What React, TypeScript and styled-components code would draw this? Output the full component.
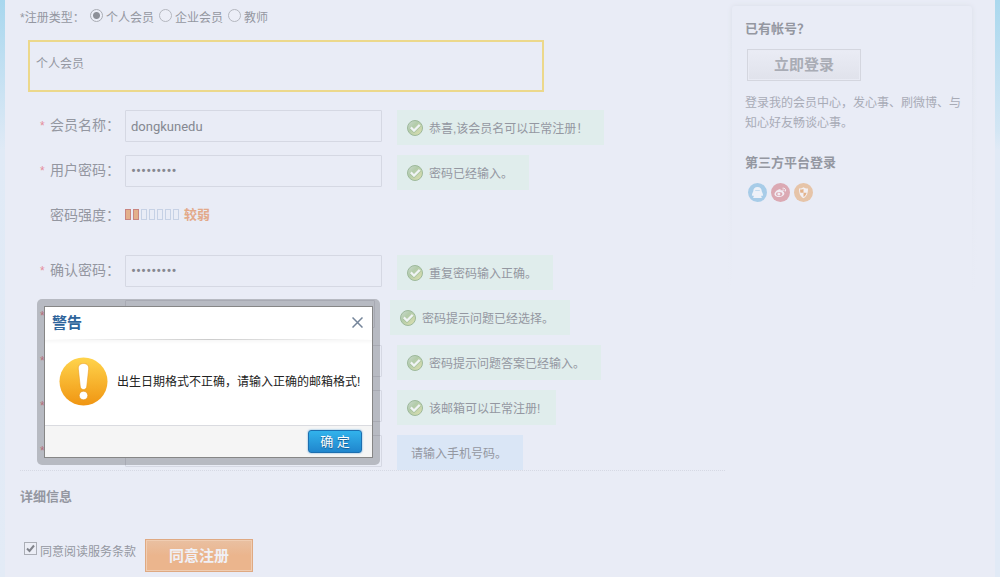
import React from "react";
import styled, { createGlobalStyle, css } from "styled-components";

const sans = `"Liberation Sans", "Noto Sans CJK SC", sans-serif`;

const GlobalStyle = createGlobalStyle`
  *, *::before, *::after { box-sizing: border-box; }
  body {
    margin: 0;
    background: #e9ecf6;
    color: #9497a1;
    font: 12px/20px ${sans};
  }
  button, input, select { font: inherit; color: inherit; margin: 0; }
  h1, h2, p { margin: 0; }
`;

const Page = styled.div`
  position: relative;
  min-height: 577px;
  padding: 0 5px;
  background:
    linear-gradient(#a8d7ee, #e0eaf6 150px, #e3ebf6) left / 5px 100% no-repeat,
    linear-gradient(#aad8ee, #d3e6f4 130px, #e1eaf6 150px) right / 5px 100% no-repeat,
    #e9ecf6;
`;

const Columns = styled.div`
  display: flex;
  align-items: flex-start;
  gap: 7px;
  padding: 0 23px 0 15px;
`;

const Main = styled.form`
  flex: 1;
  min-width: 0;
`;

const TypeBar = styled.fieldset`
  display: flex;
  align-items: center;
  gap: 5px;
  height: 40px;
  margin: 0;
  padding: 0 0 4px;
  border: 0;
`;

const TypeLabel = styled.span`
  width: 65px;
  white-space: nowrap;
`;

const Choice = styled.label`
  display: flex;
  align-items: center;
  gap: 3px;
  white-space: nowrap;
`;

const Radio = styled.input`
  appearance: none;
  width: 13px;
  height: 13px;
  margin-bottom: 6px;
  border: 1px solid #b4b7bf;
  border-radius: 50%;
  background: #eceef7;
  &:checked {
    border-color: #a9acb4;
    background: radial-gradient(circle, #8d9098 3px, #eceef7 4px);
  }
`;

const TypeNote = styled.div`
  width: 516px;
  max-width: 100%;
  height: 52px;
  margin-left: 8px;
  padding: 12px 6px;
  border: 2px solid #ecd88b;
`;

const Fields = styled.div`
  display: grid;
  gap: 10px;
  padding-top: 18px;
  border-bottom: 1px dotted #d6d9e4;
`;

const Row = styled.div<{ $tall?: boolean }>`
  display: flex;
  align-items: flex-start;
  height: ${(p) => (p.$tall ? 45 : 35)}px;
`;

const FieldLabel = styled.label`
  width: 105px;
  padding-left: 20px;
  font-size: 14px;
  line-height: 30px;
  white-space: nowrap;
`;

const Star = styled.span`
  display: inline-block;
  width: 10px;
  font-size: 12px;
  color: #e58d9a;
`;

const control = css`
  height: 32px;
  padding: 0 5px;
  border: 1px solid #d5d8e3;
  border-radius: 1px;
  background: #e9ecf6;
  outline: 0;
`;

const TextBox = styled.input`
  ${control}
  width: 257px;
  font-family: Roboto, sans-serif;
  font-size: ${(p) => (p.type === "password" ? 15 : 13)}px;
  color: #858891;
`;

const Select = styled.select`
  ${control}
  width: 250px;
  height: 28px;
`;

const Tip = styled.div<{ $hint?: boolean }>`
  display: flex;
  align-items: center;
  gap: 6px;
  height: 35px;
  margin-left: 15px;
  padding: 0 16px 0 ${(p) => (p.$hint ? 14 : 10)}px;
  background: ${(p) => (p.$hint ? "#dae6f6" : "#e0edec")};
  white-space: nowrap;
`;

const TipText = styled.span`
  padding-top: 2px;
`;

const Strength = styled.div`
  display: flex;
  align-items: center;
  gap: 2px;
  height: 29px;
`;

const Cell = styled.span<{ $on: boolean }>`
  width: 6px;
  height: 11px;
  border: 1px solid ${(p) => (p.$on ? "#c98580" : "#c6d1e5")};
  background: ${(p) => (p.$on ? "#e3b08b" : "transparent")};
`;

const Level = styled.strong`
  margin-left: 3px;
  font-size: 13px;
  color: #e3a98a;
`;

const SectionTitle = styled.h2`
  font-size: 13px;
  line-height: 20px;
  color: #9497a1;
`;

const Details = styled.section`
  padding: 16px 0 32px;
`;

const Submit = styled.div`
  display: flex;
  align-items: center;
  gap: 9px;
  padding-left: 4px;
`;

const Terms = styled.label`
  display: flex;
  align-items: center;
  gap: 3px;
  padding-bottom: 8px;
  white-space: nowrap;
`;

const TickBox = styled.span`
  position: relative;
  display: flex;
  width: 13px;
  height: 13px;
  margin-bottom: 6px;
  svg { position: absolute; inset: 0; pointer-events: none; }
  input {
    appearance: none;
    width: 13px;
    height: 13px;
    border: 1px solid #abaeb6;
    background: #eceef6;
  }
`;

const RegisterButton = styled.button`
  width: 108px;
  height: 33px;
  padding: 0;
  border: 1px solid #dfa982;
  background: linear-gradient(#e9c0a2, #ebb58d 50%, #ebb58d);
  box-shadow: inset 0 0 0 1px #f0cdb2;
  font-size: 15px;
  font-weight: bold;
  color: #f0f0f6;
`;

const Side = styled.aside`
  position: relative;
  z-index: 0;
  width: 240px;
  min-height: 294px;
  margin-top: 6px;
  padding: 13px 10px 0 13px;
  &::before, &::after {
    content: "";
    position: absolute;
    z-index: -1;
    inset: 0;
    border-radius: 3px;
    box-shadow: 0 0 5px #dadde7;
  }
  &::after {
    inset: 20px -8px -8px;
    box-shadow: none;
    background: linear-gradient(#e9ecf600, #e9ecf6 270px);
  }
`;

const LoginButton = styled.button`
  display: block;
  width: 114px;
  height: 32px;
  margin: 10px 0 12px 2px;
  padding: 0;
  border: 1px solid #d4d6df;
  background: linear-gradient(#eaecf5, #e0e2eb);
  box-shadow: inset 0 0 0 1px #e9ebf4;
  font-size: 15px;
  font-weight: bold;
  color: #a9acb5;
`;

const Blurb = styled.p`
  margin-bottom: 20px;
  color: #a8abb6;
`;

const Socials = styled.div`
  display: flex;
  gap: 4px;
  margin: 10px 0 0 3px;
  a { display: block; height: 19px; }
  svg { display: block; }
`;

const Frame = styled.div`
  position: absolute;
  left: 37px;
  top: 299px;
  width: 343px;
  padding: 7px;
  border-radius: 5px;
  background: rgba(0, 0, 0, 0.21);
`;

const Dialog = styled.div`
  border: 1px solid #868686;
  background: #fff;
  color: #222;
`;

const DialogHead = styled.div`
  display: flex;
  align-items: center;
  justify-content: space-between;
  height: 33px;
  padding: 0 7px 2px;
  background: linear-gradient(90deg, #fff, #ccc 50%, #fff) bottom / 100% 1px no-repeat;
`;

const DialogTitle = styled.h1`
  font-size: 15px;
  line-height: 20px;
  color: #2f659c;
`;

const CloseButton = styled.button`
  display: flex;
  padding: 2px;
  border: 0;
  background: none;
`;

const DialogBody = styled.div`
  display: flex;
  align-items: center;
  gap: 9px;
  height: 85px;
  padding: 0 0 2px 14px;
  background: linear-gradient(#f7f7f7, #fff 4px);
  white-space: nowrap;
`;

const DialogFoot = styled.div`
  display: flex;
  align-items: center;
  justify-content: flex-end;
  height: 32px;
  padding-right: 10px;
  border-top: 1px solid #dadbe0;
  background: #f5f5f5;
`;

const OkButton = styled.button`
  width: 54px;
  height: 23px;
  padding: 0;
  border: 1px solid #1c6fb0;
  border-radius: 3px;
  background: linear-gradient(#32b3ec, #2086cd);
  box-shadow: 0 0 2px #58a5dc;
  line-height: 20px;
  font-size: 13px;
  color: #fff;
  text-shadow: 0 1px 1px #14558c;
`;

const CheckBall = () => (
  <svg width="16" height="16" viewBox="0 0 16 16" aria-hidden="true">
    <defs>
      <linearGradient id="ball" x1="0" y1="0" x2="1" y2="1">
        <stop offset="0" stopColor="#cbd9d2" />
        <stop offset=".4" stopColor="#b3ccaa" />
        <stop offset="1" stopColor="#e2e2b0" />
      </linearGradient>
    </defs>
    <circle cx="8" cy="8" r="7.5" fill="url(#ball)" stroke="#9db99b" />
    <path d="M3.800 7.600 7 10.800l5.700-5.600" fill="none" stroke="#9dba94" strokeWidth="3.200" />
    <path d="M3.800 7.300 7 10.500l5.700-5.600" fill="none" stroke="#f0f4f4" strokeWidth="2.400" />
  </svg>
);

const WarningIcon = () => (
  <svg width="49" height="49" viewBox="0 0 49 49" aria-hidden="true">
    <defs>
      <linearGradient id="warn" x1="0" y1="0" x2="0" y2="1">
        <stop offset="0" stopColor="#ffd44c" />
        <stop offset="1" stopColor="#f09512" />
      </linearGradient>
    </defs>
    <circle cx="24.500" cy="24.500" r="24" fill="url(#warn)" />
    <path
      d="M24.500 6.500c3.800 0 5.500 2.200 5.200 5.600l-1.900 17c-.3 2.300-1.300 3.400-3.300 3.400s-3-1.100-3.300-3.400l-1.900-17c-.3-3.400 1.400-5.600 5.200-5.600z"
      fill="#fff"
      stroke="#ec9c1c"
      strokeWidth=".6"
    />
    <circle cx="24.500" cy="38.500" r="4.300" fill="#fff" stroke="#e08d10" strokeWidth=".6" />
  </svg>
);

const QqIcon = () => (
  <svg width="19" height="19" viewBox="0 0 19 19" aria-hidden="true">
    <circle cx="9.500" cy="9.500" r="9.500" fill="#a7cce8" />
    <path
      d="M9.500 4c-2.800 0-4.200 1.700-4.200 4 0 .8-1.400 2.500-1.400 4.300 0 .8.700.6 1.200-.1.200.7.500 1.200.9 1.600-.7.300-1 .7-.8 1.200h8.600c.2-.5-.1-.9-.8-1.200.4-.4.700-.9.900-1.600.5.700 1.200.9 1.200.1 0-1.800-1.400-3.500-1.400-4.300 0-2.300-1.400-4-4.200-4z"
      fill="#edf1f8"
    />
    <path d="M7.200 7.500h4.600" stroke="#c5dcef" />
  </svg>
);

const WeiboIcon = () => (
  <svg width="19" height="19" viewBox="0 0 19 19" aria-hidden="true">
    <circle cx="9.500" cy="9.500" r="9.500" fill="#dba9b3" />
    <path
      d="M8.200 6.300c1-.4 1.700 0 1.500 1.100 1.500-.5 2.600-.2 2.200 1.100 3 1.300 1.300 5.500-3.700 5.500-4.500 0-6-2.700-3.600-5.300 1-1.100 2.300-2 3.600-2.400z"
      fill="#f2edf4"
    />
    <ellipse cx="8.200" cy="10.900" rx="3.200" ry="2" fill="#dba9b3" />
    <circle cx="7.900" cy="11" r="1.500" fill="#f2edf4" />
    <path d="M11.500 5.200c2-.5 3.600 1 3 3.200M11.700 6.900c.9-.2 1.500.4 1.300 1.300" fill="none" stroke="#f2edf4" />
  </svg>
);

const ShieldIcon = () => (
  <svg width="19" height="19" viewBox="0 0 19 19" aria-hidden="true">
    <circle cx="9.500" cy="9.500" r="9.500" fill="#e6c4a8" />
    <path d="M5 5.500c2 0 3.400-.4 4.500-1.200 1.100.8 2.500 1.200 4.500 1.200 0 4.500-1 8-4.500 9.700C6 13.500 5 10 5 5.500z" fill="#f3f0f3" />
    <path d="M9.500 6v3.700H6.400C6.200 8.700 6.100 7.800 6.100 6.600c1.300 0 2.400-.2 3.400-.6zM9.500 9.700h3.100c-.5 1.900-1.400 3.200-3.100 4.200z" fill="#e3b28a" />
  </svg>
);

type Field = {
  id: string;
  label: string;
  kind: "text" | "password" | "select";
  value?: string;
  tip: string;
  hint?: boolean;
};

const account: Field[] = [
  { id: "name", label: "会员名称：", kind: "text", value: "dongkunedu", tip: "恭喜,该会员名可以正常注册！" },
  { id: "pass", label: "用户密码：", kind: "password", value: "123456789", tip: "密码已经输入。" },
];

const security: Field[] = [
  { id: "confirm", label: "确认密码：", kind: "password", value: "123456789", tip: "重复密码输入正确。" },
  { id: "question", label: "", kind: "select", tip: "密码提示问题已经选择。" },
  { id: "answer", label: "", kind: "text", tip: "密码提示问题答案已经输入。" },
  { id: "email", label: "", kind: "text", tip: "该邮箱可以正常注册!" },
  { id: "phone", label: "", kind: "text", tip: "请输入手机号码。", hint: true },
];

const FieldRow = ({ field }: { field: Field }) => (
  <Row>
    <FieldLabel htmlFor={field.id}>
      <Star>*</Star>
      {field.label}
    </FieldLabel>
    {field.kind === "select" ? (
      <Select id={field.id} />
    ) : (
      <TextBox id={field.id} type={field.kind} defaultValue={field.value} />
    )}
    <Tip $hint={field.hint}>
      {!field.hint && <CheckBall />}
      <TipText>{field.tip}</TipText>
    </Tip>
  </Row>
);

export default function App() {
  return (
    <>
      <GlobalStyle />
      <Page>
        <Columns>
          <Main onSubmit={(e) => e.preventDefault()}>
            <TypeBar>
              <TypeLabel>*注册类型：</TypeLabel>
              {["个人会员", "企业会员", "教师"].map((t, i) => (
                <Choice key={t}>
                  <Radio type="radio" name="type" defaultChecked={i === 0} />
                  {t}
                </Choice>
              ))}
            </TypeBar>
            <TypeNote>个人会员</TypeNote>
            <Fields>
              {account.map((f) => (
                <FieldRow key={f.id} field={f} />
              ))}
              <Row $tall>
                <FieldLabel as="span">
                  <Star />
                  密码强度：
                </FieldLabel>
                <Strength>
                  {[0, 1, 2, 3, 4, 5, 6].map((n) => (
                    <Cell key={n} $on={n < 2} />
                  ))}
                  <Level>较弱</Level>
                </Strength>
              </Row>
              {security.map((f) => (
                <FieldRow key={f.id} field={f} />
              ))}
            </Fields>
            <Details>
              <SectionTitle>详细信息</SectionTitle>
            </Details>
            <Submit>
              <Terms>
                <TickBox>
                  <input type="checkbox" defaultChecked />
                  <svg width="13" height="13" viewBox="0 0 13 13" aria-hidden="true">
                    <path d="M3 6.500 5.500 9 10 3.500" fill="none" stroke="#80838b" strokeWidth="2" />
                  </svg>
                </TickBox>
                同意阅读服务条款
              </Terms>
              <RegisterButton type="submit">同意注册</RegisterButton>
            </Submit>
          </Main>
          <Side>
            <SectionTitle>已有帐号？</SectionTitle>
            <LoginButton type="button">立即登录</LoginButton>
            <Blurb>登录我的会员中心，发心事、刷微博、与知心好友畅谈心事。</Blurb>
            <SectionTitle>第三方平台登录</SectionTitle>
            <Socials>
              <a href="#qq" aria-label="QQ"><QqIcon /></a>
              <a href="#weibo" aria-label="微博"><WeiboIcon /></a>
              <a href="#shield" aria-label="360"><ShieldIcon /></a>
            </Socials>
          </Side>
        </Columns>
        <Frame>
          <Dialog role="dialog" aria-labelledby="warning-title">
            <DialogHead>
              <DialogTitle id="warning-title">警告</DialogTitle>
              <CloseButton type="button" aria-label="关闭">
                <svg width="11" height="11" viewBox="0 0 11 11">
                  <path d="M.5.500l10 10M10.500.500l-10 10" stroke="#75859a" strokeWidth="1.500" />
                </svg>
              </CloseButton>
            </DialogHead>
            <DialogBody>
              <WarningIcon />
              <p>出生日期格式不正确，请输入正确的邮箱格式!</p>
            </DialogBody>
            <DialogFoot>
              <OkButton type="button">确 定</OkButton>
            </DialogFoot>
          </Dialog>
        </Frame>
      </Page>
    </>
  );
}
